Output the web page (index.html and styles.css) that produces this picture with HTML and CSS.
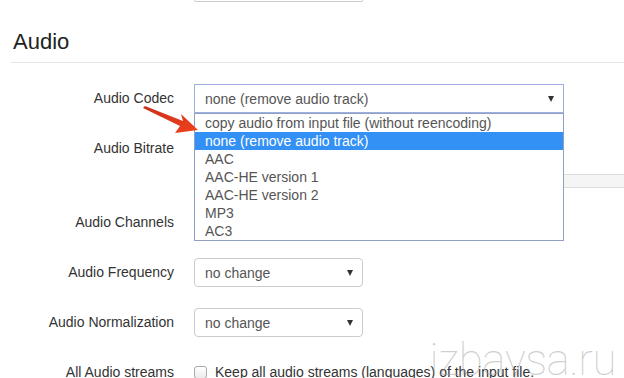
FILE: index.html
```html
<!DOCTYPE html>
<html lang="en">
<head>
  <meta charset="UTF-8" />
  <title>Audio settings</title>
  <link rel="stylesheet" href="styles.css">
</head>
<body>
  <div class="page">
    <div class="prev-field"></div>

    <h3 class="section-title">Audio</h3>

    <div class="form-group">
      <label class="control-label">Audio Codec</label>
      <div class="control">
        <div class="select select-wide is-open">
          <span>none (remove audio track)</span>
          <span class="caret"></span>
        </div>
        <ul class="dropdown">
          <li>copy audio from input file (without reencoding)</li>
          <li class="selected">none (remove audio track)</li>
          <li>AAC</li>
          <li>AAC-HE version 1</li>
          <li>AAC-HE version 2</li>
          <li>MP3</li>
          <li>AC3</li>
        </ul>
        <svg class="pointer" width="60" height="32" viewBox="0 0 60 32">
          <defs>
            <linearGradient id="arrowFill" x1="0" y1="0" x2="1" y2="1">
              <stop offset="0" stop-color="#c9301a"/>
              <stop offset="1" stop-color="#f0421e"/>
            </linearGradient>
          </defs>
          <path d="M1 4 L3 2 L41 17 L39 10 L56 26 L33 29 L38 22 Z" fill="url(#arrowFill)"/>
        </svg>
      </div>
    </div>

    <div class="form-group bitrate">
      <label class="control-label">Audio Bitrate</label>
      <div class="control">
        <!-- covered by the open codec list -->
        <div class="select select-wide"></div>
        <div class="slider"></div>
      </div>
    </div>

    <div class="form-group">
      <label class="control-label">Audio Channels</label>
      <div class="control">
        <div class="select select-small"></div>
      </div>
    </div>

    <div class="form-group">
      <label class="control-label">Audio Frequency</label>
      <div class="control">
        <div class="select select-small"><span>no change</span><span class="caret"></span></div>
      </div>
    </div>

    <div class="form-group">
      <label class="control-label">Audio Normalization</label>
      <div class="control">
        <div class="select select-small"><span>no change</span><span class="caret"></span></div>
      </div>
    </div>

    <div class="form-group">
      <label class="control-label">All Audio streams</label>
      <div class="control check-row">
        <span class="checkbox"></span>
        <span>Keep all audio streams (languages) of the input file.</span>
      </div>
    </div>
  </div>

  <div class="watermark">izbaysa.ru</div>
</body>
</html>
```

FILE: styles.css
```css
* { box-sizing: border-box; margin: 0; padding: 0; }
html, body {
  width: 624px;
  height: 378px;
  overflow: hidden;
}
body {
  background: #fff;
  color: #333;
  font-family: "Liberation Sans", Arial, sans-serif;
  font-size: 14px;
  position: relative;
}

.page {
  padding-left: 11px;
}

/* bottom of the field from the section above */
.prev-field {
  margin-left: 183px;
  width: 169px;
  height: 2px;
  border: 1px solid #ccc;
  border-top: none;
  border-radius: 0 0 4px 4px;
}

.section-title {
  margin-top: 28px;
  padding: 0 0 8px 2px;
  font-size: 22px;
  font-weight: normal;
  line-height: 24px;
  color: #222;
  border-bottom: 1px solid #e5e5e5;
}

.form-group {
  display: flex;
  align-items: flex-start;
  gap: 20px;
  margin-top: 21px;
}

.control-label {
  width: 163px;
  flex: none;
  text-align: right;
  line-height: 29px;
  color: #333;
}

.control {
  position: relative;
  flex: 1;
}

.select {
  display: flex;
  align-items: center;
  justify-content: space-between;
  height: 29px;
  padding: 0 9px 0 10px;
  border: 1px solid #ccc;
  border-radius: 4px;
  color: #555;
  background: #fff;
}
.select-wide { width: 370px; }
.select-small { width: 169px; }
.select.is-open {
  border-color: #9eb0dc;
  border-radius: 0;
}
.caret {
  width: 0; height: 0;
  border-left: 3.5px solid transparent;
  border-right: 3.5px solid transparent;
  border-top: 6px solid #333;
}

.dropdown {
  position: absolute;
  top: 29px; left: 0;
  width: 370px;
  list-style: none;
  background: #fff;
  border: 1px solid #8f9fc6;
  color: #555;
  z-index: 5;
}
.dropdown li {
  height: 18px;
  line-height: 18px;
  padding-left: 10px;
}
.dropdown li.selected {
  background: #3390f5;
  color: #fff;
}

.pointer {
  position: absolute;
  left: -52px; top: 20px;
  z-index: 6;
}

.bitrate .control { height: 53px; }
.slider {
  margin-top: 11px;
  height: 14px;
  border-top: 1px solid #ddd;
  border-bottom: 1px solid #ddd;
  background: #f5f5f5;
  width: 431px;
}

.check-row {
  display: flex;
  align-items: center;
  gap: 8px;
  line-height: 29px;
}
.checkbox {
  width: 13px; height: 13px;
  border: 1px solid #aaa;
  border-radius: 3px;
  background: linear-gradient(#fff, #ececec);
}

.watermark {
  position: absolute;
  right: 8px; bottom: -6px;
  font-family: Roboto, sans-serif;
  font-weight: 100;
  font-size: 44px;
  line-height: 48px;
  letter-spacing: -0.5px;
  color: rgba(160,160,160,0.5);
  z-index: 10;
}
```
